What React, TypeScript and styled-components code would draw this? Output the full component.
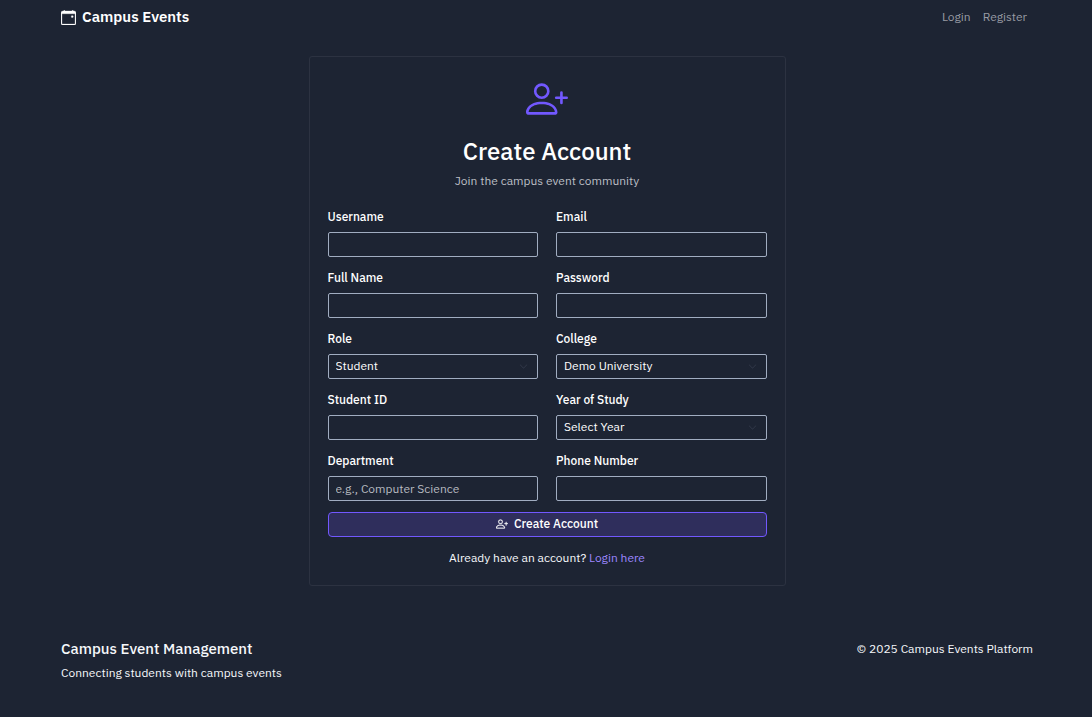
import React, { useId } from "react";
import type { ReactNode } from "react";
import styled, { createGlobalStyle, css } from "styled-components";
import { BsCalendarEvent, BsChevronDown, BsPersonPlus } from "react-icons/bs";

const GlobalStyle = createGlobalStyle`
  *, *::before, *::after { box-sizing: border-box; }
  body {
    margin: 0;
    background: #1d2433;
    color: #f6f8fb;
    font-family: "IBM Plex Sans", Inter, sans-serif;
    font-size: 12px;
    font-weight: 400;
    line-height: 18px;
  }
`;

const Page = styled.div`
  display: flex;
  flex-direction: column;
  max-width: 1220px;
  margin: 0 auto;
  padding: 0 59px 0 61px;
`;

const Header = styled.header`
  display: flex;
  align-items: center;
  justify-content: space-between;
  height: 34px;
`;

const Brand = styled.a`
  display: flex;
  align-items: center;
  gap: 6px;
  color: #ffffff;
  font-size: 15px;
  font-weight: 600;
  line-height: 22px;
  text-decoration: none;
`;

const BrandIcon = styled(BsCalendarEvent)`
  width: 15px;
  height: 15px;
  stroke: currentColor;
  stroke-width: 0.3;
`;

const Nav = styled.nav`
  display: flex;
  gap: 12px;
  padding-right: 6px;
`;

const NavLink = styled.a`
  color: #989ba4;
  text-decoration: none;
`;

const Card = styled.main`
  width: 100%;
  max-width: 477px;
  margin: 22px auto 0;
  padding: 18px;
  border: 1px solid #2c3241;
  border-radius: 3px;
`;

const Intro = styled.div`
  display: flex;
  flex-direction: column;
  align-items: center;
  margin-bottom: 18px;
  padding-top: 3px;
  text-align: center;
`;

const IntroIcon = styled(BsPersonPlus)`
  width: 42px;
  height: 42px;
  color: #7258ff;
`;

const Title = styled.h1`
  margin: 16px 0 6px;
  color: #ffffff;
  font-size: 24px;
  font-weight: 500;
  line-height: 30px;
`;

const Subtitle = styled.p`
  margin: 0;
  color: #bcbfc5;
`;

const Form = styled.form`
  display: flex;
  flex-direction: column;
  gap: 11px;
`;

const Fields = styled.div`
  display: grid;
  grid-template-columns: 1fr 1fr;
  gap: 12px 18px;
`;

const FieldBox = styled.div`
  display: flex;
  flex-direction: column;
  gap: 6px;
`;

const Label = styled.label`
  color: #ffffff;
  font-weight: 500;
`;

const control = css`
  width: 100%;
  height: 25px;
  padding: 0 7px;
  border: 1px solid #a1adc1;
  border-radius: 2px;
  background: transparent;
  color: #ffffff;
  font: inherit;
  outline: none;

  &:focus { border-color: #7258ff; }
`;

const Input = styled.input`
  ${control}
  &::placeholder { color: #b8bbc1; opacity: 1; }
`;

const SelectWrap = styled.div`
  position: relative;
`;

const Select = styled.select`
  ${control}
  display: block;
  padding-bottom: 2px;
  appearance: none;

  option { color: #1e2433; }
`;

const Chevron = styled(BsChevronDown)`
  position: absolute;
  top: 8px;
  right: 10px;
  width: 9px;
  height: 9px;
  color: #343b4b;
  pointer-events: none;
`;

const SubmitButton = styled.button`
  display: flex;
  align-items: center;
  justify-content: center;
  gap: 6px;
  width: 100%;
  height: 25px;
  padding: 0 0 1px;
  border: 1px solid #7258ff;
  border-radius: 4px;
  background: #2f2e5c;
  color: #ffffff;
  font: inherit;
  font-weight: 500;
  cursor: pointer;
`;

const SubmitIcon = styled(BsPersonPlus)`
  width: 12px;
  height: 12px;
  stroke: currentColor;
  stroke-width: 0.3;
`;

const LoginPrompt = styled.p`
  margin: 12px 0 0;
  text-align: center;
`;

const TextLink = styled.a`
  color: #9c86ff;
  text-decoration: none;
`;

const Footer = styled.footer`
  display: flex;
  align-items: flex-start;
  justify-content: space-between;
  margin-top: 54px;
  padding-bottom: 34px;
`;

const FooterTitle = styled.h2`
  margin: 0 0 6px;
  font-size: 15px;
  font-weight: 500;
  line-height: 18px;
`;

const FooterText = styled.p`
  margin: 0;
`;

interface FieldProps {
  label: string;
  children: (id: string) => ReactNode;
}

function Field({ label, children }: FieldProps) {
  const id = useId();
  return (
    <FieldBox>
      <Label htmlFor={id}>{label}</Label>
      {children(id)}
    </FieldBox>
  );
}

function TextField({ label, type = "text", placeholder }: { label: string; type?: string; placeholder?: string }) {
  return <Field label={label}>{(id) => <Input id={id} type={type} placeholder={placeholder} />}</Field>;
}

function SelectField({ label, options }: { label: string; options: string[] }) {
  return (
    <Field label={label}>
      {(id) => (
        <SelectWrap>
          <Select id={id}>
            {options.map((option) => (
              <option key={option}>{option}</option>
            ))}
          </Select>
          <Chevron aria-hidden />
        </SelectWrap>
      )}
    </Field>
  );
}

export default function App() {
  return (
    <>
      <GlobalStyle />
      <Page>
        <Header>
          <Brand href="#">
            <BrandIcon aria-hidden />
            Campus Events
          </Brand>
          <Nav>
            <NavLink href="#login">Login</NavLink>
            <NavLink href="#register">Register</NavLink>
          </Nav>
        </Header>

        <Card>
          <Intro>
            <IntroIcon aria-hidden />
            <Title>Create Account</Title>
            <Subtitle>Join the campus event community</Subtitle>
          </Intro>
          <Form onSubmit={(event) => event.preventDefault()}>
            <Fields>
              <TextField label="Username" />
              <TextField label="Email" type="email" />
              <TextField label="Full Name" />
              <TextField label="Password" type="password" />
              <SelectField label="Role" options={["Student"]} />
              <SelectField label="College" options={["Demo University"]} />
              <TextField label="Student ID" />
              <SelectField label="Year of Study" options={["Select Year"]} />
              <TextField label="Department" placeholder="e.g., Computer Science" />
              <TextField label="Phone Number" type="tel" />
            </Fields>
            <SubmitButton type="submit">
              <SubmitIcon aria-hidden />
              Create Account
            </SubmitButton>
          </Form>
          <LoginPrompt>
            Already have an account? <TextLink href="#login">Login here</TextLink>
          </LoginPrompt>
        </Card>

        <Footer>
          <div>
            <FooterTitle>Campus Event Management</FooterTitle>
            <FooterText>Connecting students with campus events</FooterText>
          </div>
          <FooterText>© 2025 Campus Events Platform</FooterText>
        </Footer>
      </Page>
    </>
  );
}
